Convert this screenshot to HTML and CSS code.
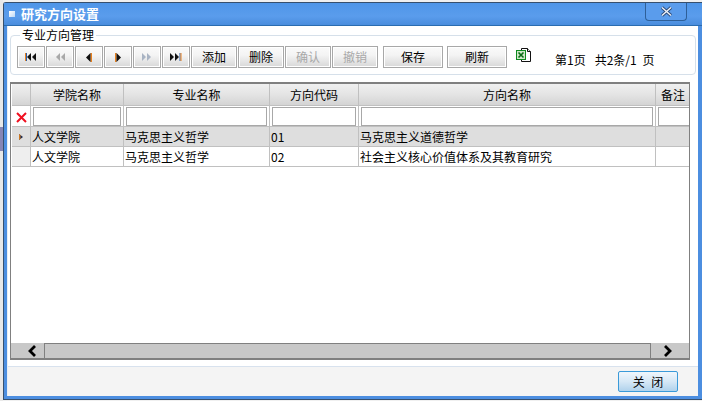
FILE: index.html
```html
<!DOCTYPE html>
<html lang="zh">
<head>
<meta charset="utf-8">
<title>研究方向设置</title>
<link rel="stylesheet" href="styles.css">
</head>
<body>
<div class="backdrop"><i class="tint"></i></div>
<div class="window">
  <header class="titlebar">
    <span class="title-icon"></span>
    <span class="title-text">研究方向设置</span>
    <button class="win-close" type="button" aria-label="关闭">
      <svg width="13" height="11" viewBox="0 0 13 11"><path d="M2 1.500 L11 9.500 M11 1.500 L2 9.500" stroke="#2d4a78" stroke-width="3.200" fill="none"/><path d="M2 1.500 L11 9.500 M11 1.500 L2 9.500" stroke="#f0f5fc" stroke-width="1.400" fill="none"/></svg>
    </button>
  </header>
  <main class="body">
    <fieldset class="panel">
      <legend class="panel-legend">专业方向管理</legend>
      <div class="toolbar">
        <button class="btn nav" type="button"><svg width="12" height="8" viewBox="0 0 12 8"><rect x="0" y="0" width="1" height="8" fill="#e8801e"/><rect x="1" y="0" width="1" height="8" fill="#2a5ea8"/><path d="M6 0V8L2 4ZM11 0V8L7 4Z" fill="#111"/></svg></button>
        <button class="btn nav" type="button" disabled><svg width="12" height="8" viewBox="0 0 12 8"><path d="M6 0V8L2 4ZM11 0V8L7 4Z" fill="#a9a9a9"/></svg></button>
        <button class="btn nav" type="button"><svg width="6" height="9" viewBox="0 0 6 9"><rect x="4.500" y="0" width="1.500" height="9" fill="#e8801e"/><path d="M4.500 0V9L0 4.500Z" fill="#111"/></svg></button>
        <button class="btn nav" type="button"><svg width="6" height="9" viewBox="0 0 6 9"><rect x="0" y="0" width="1.500" height="9" fill="#e8801e"/><path d="M1.500 0V9L6 4.500Z" fill="#111"/></svg></button>
        <button class="btn nav" type="button" disabled><svg width="12" height="8" viewBox="0 0 12 8"><path d="M1 0V8L5 4ZM6 0V8L10 4Z" fill="#a9b4c4"/></svg></button>
        <button class="btn nav" type="button"><svg width="12" height="8" viewBox="0 0 12 8"><path d="M0 0V8L4 4ZM5 0V8L9 4Z" fill="#111"/><rect x="9.500" y="0" width="1" height="8" fill="#2a5ea8"/><rect x="10.500" y="0" width="1" height="8" fill="#e8801e"/></svg></button>
        <button class="btn act" type="button">添加</button>
        <button class="btn act" type="button">删除</button>
        <button class="btn act" type="button" disabled>确认</button>
        <button class="btn act" type="button" disabled>撤销</button>
        <button class="btn wide save" type="button">保存</button>
        <button class="btn wide" type="button">刷新</button>
        <svg class="excel" width="16" height="16" viewBox="0 0 16 16">
          <path d="M5.500 1.500H11.500L14.500 4.500V14.500H5.500Z" fill="#fff" stroke="#111"/>
          <path d="M11.500 1.500V4.500H14.500" fill="#e8e8e8" stroke="#111"/>
          <rect x="0.500" y="3.500" width="9" height="9" fill="#cfe8c8" stroke="#0e8a1e"/>
          <path d="M2.500 5.500L7.500 10.500M7.500 5.500L2.500 10.500" stroke="#0b6b16" stroke-width="1.600"/>
        </svg>
        <span class="pager"><span class="page-no">第1页</span><span class="page-total">共2条/1 页</span></span>
      </div>
    </fieldset>
    <section class="grid">
      <div class="grid-scroll">
        <table class="table">
          <colgroup><col class="c0"><col class="c1"><col class="c2"><col class="c3"><col class="c4"><col class="c5"></colgroup>
          <thead>
            <tr class="head"><th></th><th>学院名称</th><th>专业名称</th><th>方向代码</th><th>方向名称</th><th>备注</th></tr>
            <tr class="filter">
              <td class="clear"><svg width="11" height="11" viewBox="0 0 11 11"><path d="M1 1L10 10M10 1L1 10" stroke="#f01020" stroke-width="2"/></svg></td>
              <td><input class="in" type="text"></td>
              <td><input class="in" type="text"></td>
              <td><input class="in" type="text"></td>
              <td><input class="in" type="text"></td>
              <td class="last"><input class="in" type="text"></td>
            </tr>
          </thead>
          <tbody>
            <tr class="row on"><td class="mark"><svg width="4" height="6" viewBox="0 0 4 6"><path d="M0 0V6L4 3Z" fill="#1c2c50"/><path d="M0 0V6L1.500 5V1Z" fill="#d07820"/></svg></td><td>人文学院</td><td>马克思主义哲学</td><td>01</td><td>马克思主义道德哲学</td><td></td></tr>
            <tr class="row"><td class="mark"></td><td>人文学院</td><td>马克思主义哲学</td><td>02</td><td>社会主义核心价值体系及其教育研究</td><td></td></tr>
          </tbody>
        </table>
      </div>
      <div class="hbar">
        <span class="arrow left"><svg width="10" height="12" viewBox="0 0 10 12"><path d="M8 1L3 6L8 11" stroke="#000" stroke-width="2.800" fill="none"/></svg></span>
        <span class="thumb"></span>
        <span class="arrow right"><svg width="10" height="12" viewBox="0 0 10 12"><path d="M2 1L7 6L2 11" stroke="#000" stroke-width="2.800" fill="none"/></svg></span>
      </div>
    </section>
    <footer class="footer">
      <button class="close-btn" type="button">关 闭</button>
    </footer>
  </main>
</div>
</body>
</html>
```
FILE: styles.css
```css
* { box-sizing: border-box; }
html, body { margin: 0; height: 401px; overflow: hidden; }
body {
  position: relative;
  background: #f0f0f0;
  padding: 2px 0 0 3px;
  font: 12px/16px "Noto Sans CJK SC", "Liberation Sans", sans-serif;
  color: #000;
}
.backdrop { position: absolute; left: 0; top: 0; width: 3px; height: 401px; background: #e8e8e8; }
.tint { position: absolute; left: 0; top: 127px; width: 3px; height: 24px; background: #8585b5; }
.window {
  position: relative;
  width: 699px;
  height: 398px;
  display: flex;
  flex-direction: column;
  background: #4c8ee0;
  border: 1px solid #37506e;
  border-right: 0;
  border-radius: 3px 0 0 0;
  padding: 0 4px 3px 3px;
}
.titlebar {
  height: 23px;
  flex: none;
  display: flex;
  align-items: center;
  margin: 0 -4px 0 -3px;
  padding: 0 0 0 5px;
  position: relative;
  background: linear-gradient(#4f96e8, #5a9cec 60%, #4a8ddd);
  border-bottom: 1px solid #2a6cb0;
}
.title-icon {
  width: 6px;
  height: 6px;
  background: linear-gradient(135deg, #fff, #bcd8f6);
  margin-right: 6px;
}
.title-text { color: #fff; font-weight: 700; font-size: 13px; line-height: 16px; }
.win-close {
  position: absolute;
  right: 15px;
  top: 0;
  width: 42px;
  height: 18px;
  padding: 0;
  display: flex;
  align-items: center;
  justify-content: center;
  background: #5a9cec;
  border: 1px solid #2e5f98;
  border-top: 0;
  border-radius: 0 0 4px 4px;
}
.body {
  flex: 1;
  min-height: 0;
  display: flex;
  flex-direction: column;
  background: #fff;
  border-left: 1px solid #e8eef5;
}
.panel {
  margin: 2px 2px 0 2px;
  padding: 0 0 0 6px;
  height: 47px;
  border: 1px solid #d6e0ea;
  border-radius: 4px;
  min-width: 0;
}
.panel-legend { margin-left: 3px; padding: 0 2px; line-height: 14px; height: 14px; font-size: 12px; }
.toolbar { display: flex; align-items: flex-start; margin-top: 4px; }
.btn {
  height: 22px;
  padding: 0;
  font: inherit;
  color: #000;
  border: 1px solid #a8a8a8;
  background: linear-gradient(#fafafa, #f4f4f4 40%, #d8d8d8);
  box-shadow: inset 0 0 0 1px #fff;
  display: flex;
  align-items: center;
  justify-content: center;
  margin-right: 1px;
}
.btn:disabled { color: #a8a8a8; }
.nav { width: 28px; }
.act { width: 46px; }
.wide { width: 60px; margin-right: 4px; }
.save { margin-left: 4px; }
.excel { margin: 1px 0 0 5px; }
.pager { margin: 6px 0 0 23px; display: flex; gap: 9px; white-space: nowrap; line-height: 16px; }
.page-total { word-spacing: 3px; }
.grid {
  margin: 7px 8px 0 2px;
  height: 278px;
  flex: none;
  display: flex;
  flex-direction: column;
  border: 1px solid #808080;
  border-top-width: 2px;
  border-bottom: 0;
  background: #fff;
}
.grid-scroll { flex: 1; min-height: 0; overflow: hidden; padding-left: 1px; background: #fff; }
.table { table-layout: fixed; border-collapse: separate; border-spacing: 0; width: 678px; }
.c0 { width: 19px; } .c1 { width: 93px; } .c2 { width: 146px; }
.c3 { width: 89px; } .c4 { width: 297px; } .c5 { width: 34px; }
.table th, .table td { padding: 0; border-right: 1px solid #c0c0c0; border-bottom: 1px solid #c0c0c0; overflow: hidden; white-space: nowrap; }
.table th {
  height: 22px;
  font-weight: 400;
  text-align: center;
  background: linear-gradient(#f0f0f0, #e4e4e4 50%, #d4d4d4);
}
.table th:last-child { border-right: 0; }
.filter td { height: 21px; background: #fff; padding: 1px 2px 0 2px; }
.filter .clear { text-align: center; padding: 3px 0 0; line-height: 0; }
.filter .last { padding-right: 0; border-right: 0; }
.in { display: block; width: 100%; height: 19px; margin: 0; padding: 0; border: 1px solid #a8a8a8; background: #fff; }
.row td { height: 20px; padding-left: 1px; line-height: 18px; background: #fff; }
.row.on td { background: #dedede; }
.row .mark { background: #eee; padding: 0; text-align: center; line-height: 0; }
.row.on .mark { background: #dedede; }
.row td:last-child { border-right: 0; }
.hbar { height: 17px; flex: none; display: flex; background: #c8c8c8; border-bottom: 2px solid #808080; }
.arrow { display: flex; align-items: center; flex: none; }
.arrow.left { width: 33px; justify-content: flex-end; padding-right: 7px; }
.arrow.right { width: 38px; justify-content: flex-start; padding-left: 12px; }
.thumb { flex: 1; border-left: 1px solid #808080; border-right: 1px solid #808080; border-top: 1px solid #808080; background: #c8c8c8; }
.footer {
  flex: 1;
  margin-top: 6px;
  display: flex;
  justify-content: flex-end;
  align-items: flex-start;
  padding: 4px 20px 0 0;
  background: #f4f4f4;
  border-top: 1px solid #d8e2ee;
}
.close-btn {
  width: 60px;
  height: 21px;
  padding: 0;
  font: inherit;
  word-spacing: 4px;
  color: #000;
  border: 1px solid #3a9ad9;
  border-radius: 2px;
  background: linear-gradient(#f0f6fc, #d6e8f6 50%, #b0d2ec);
}
```
